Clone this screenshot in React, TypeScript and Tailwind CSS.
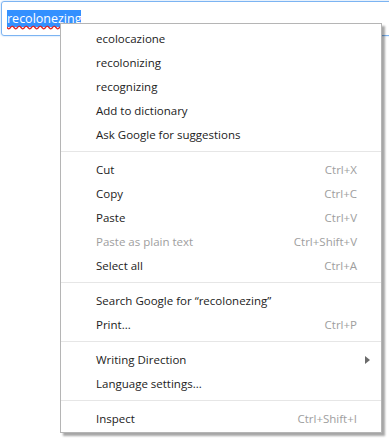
import React from "react";

type Item = {
  label: string;
  shortcut?: string;
  disabled?: boolean;
  submenu?: boolean;
};

const groups: Item[][] = [
  [
    { label: "ecolocazione" },
    { label: "recolonizing" },
    { label: "recognizing" },
    { label: "Add to dictionary" },
    { label: "Ask Google for suggestions" },
  ],
  [
    { label: "Cut", shortcut: "Ctrl+X" },
    { label: "Copy", shortcut: "Ctrl+C" },
    { label: "Paste", shortcut: "Ctrl+V" },
    { label: "Paste as plain text", shortcut: "Ctrl+Shift+V", disabled: true },
    { label: "Select all", shortcut: "Ctrl+A" },
  ],
  [
    { label: "Search Google for \u201crecolonezing\u201d" },
    { label: "Print...", shortcut: "Ctrl+P" },
  ],
  [{ label: "Writing Direction", submenu: true }, { label: "Language settings..." }],
  [{ label: "Inspect", shortcut: "Ctrl+Shift+I" }],
];

function MenuRow({ item }: { item: Item }) {
  return (
    <div
      className={`flex items-center h-[24px] pl-[35px] pr-[24px] ${
        item.disabled ? "text-[#9e9e9e]" : "text-[#222222]"
      }`}
    >
      <span className="flex-1 whitespace-nowrap">{item.label}</span>
      {item.shortcut && <span className="text-[#9e9e9e] whitespace-nowrap">{item.shortcut}</span>}
      {item.submenu && (
        <svg width="5" height="8" viewBox="0 0 5 8" className="mr-[-13px]">
          <path d="M0 0 L5 4 L0 8 Z" fill="#6b6b6b" />
        </svg>
      )}
    </div>
  );
}

export default function App() {
  return (
    <div
      className="relative w-[389px] h-[441px] bg-white overflow-hidden text-[11.5px]"
      style={{ fontFamily: '"Open Sans", "Noto Sans", sans-serif' }}
    >
      <div className="ml-[1px] mt-[1px] w-[420px] h-[35px] rounded-[3px] border border-[#7cb4f2] shadow-[0_0_2px_#a8cdf5] flex items-center pl-[5px]">
        <span className="bg-[#3390ff] text-white text-[12.5px] leading-[17px] underline decoration-wavy decoration-[#e02020] underline-offset-[2px]">
          recolonezing
        </span>
      </div>

      <div className="absolute left-[60px] top-[23px] w-[322px] bg-white border border-[#b5b5b5] shadow-[3px_3px_2px_rgba(0,0,0,0.35)] pt-[3px] pb-[1px]">
        {groups.map((g, gi) => (
          <div key={gi}>
            {gi > 0 && <div className="mt-[4px] mb-[6px] h-px bg-[#e6e6e6]" />}
            {g.map((item) => (
              <MenuRow key={item.label} item={item} />
            ))}
          </div>
        ))}
      </div>
    </div>
  );
}
